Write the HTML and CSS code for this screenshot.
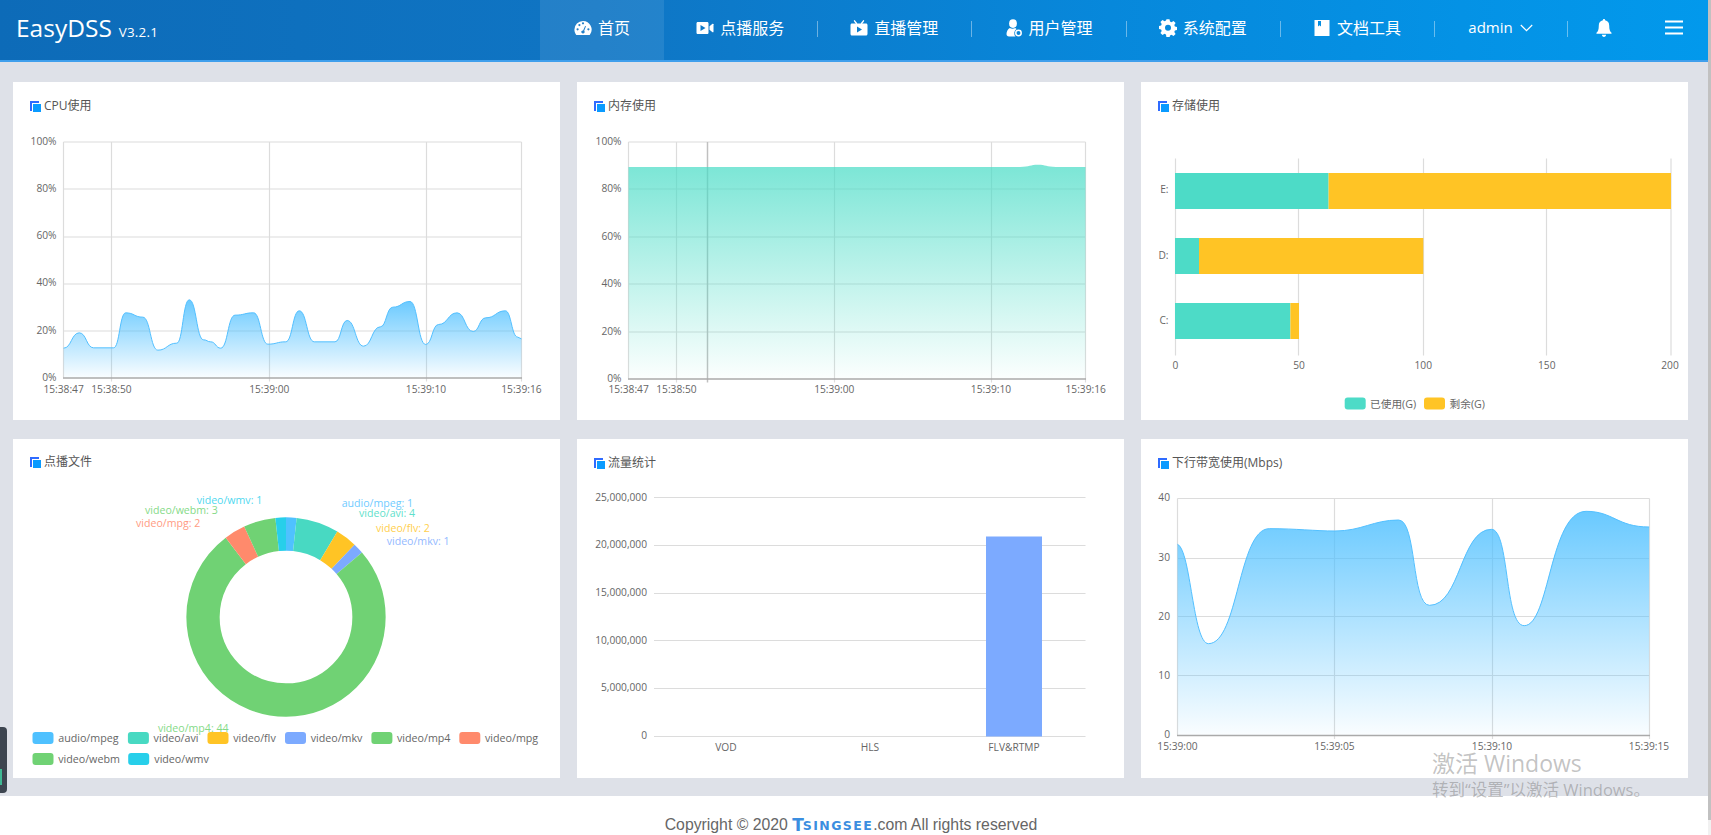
FILE: index.html
```html
<!DOCTYPE html>
<html lang="zh-CN">
<head>
<meta charset="utf-8">
<title>EasyDSS</title>
<link rel="stylesheet" href="styles.css">
</head>
<body>
<div class="page">
  <header class="topbar">
    <div class="brand"><span class="brand-name">EasyDSS</span><span class="brand-ver">V3.2.1</span></div>
    <nav class="nav">
      <div class="nav-item nav-active">
        <svg class="nav-icon" viewBox="0 0 18 16"><path fill="#fff" fill-rule="evenodd" d="M9 1a8.6 8.6 0 0 0-8.6 8.6c0 1.9.6 3.7 1.7 5.1.2.2.4.3.7.3h12.4c.3 0 .5-.1.7-.3a8.6 8.6 0 0 0-6.9-13.7zM3.6 10.4a1.1 1.1 0 1 1 0-2.2 1.1 1.1 0 0 1 0 2.2zM5.4 6.2a1.1 1.1 0 1 1 0-2.2 1.1 1.1 0 0 1 0 2.2zM9 4.4a1.1 1.1 0 1 1 0-2.200 1.1 1.1 0 0 1 0 2.200zM10.400 12.800a1.700 1.700 0 0 1-3 -1.500c.4-.7 1-1 1.700-.9l2-4.500.9.400-1.800 4.500c.5.500.6 1.300.2 2zM14.400 10.400a1.100 1.100 0 1 1 0-2.200 1.100 1.100 0 0 1 0 2.200z"/></svg>
        <span>首页</span>
      </div>
      <div class="nav-item">
        <svg class="nav-icon" viewBox="0 0 18 16"><path fill="#fff" fill-rule="evenodd" d="M1.800 2h9.400c.7 0 1.300.6 1.300 1.300v9.400c0 .7-.6 1.300-1.300 1.300H1.800c-.7 0-1.300-.6-1.300-1.300V3.300C.5 2.600 1.100 2 1.800 2zM4.500 5v6l5-3z"/><path fill="#fff" d="M13.500 6.200l3-2.400c.4-.3 1-.1 1 .5v7.400c0 .6-.6.8-1 .5l-3-2.400z"/></svg>
        <span>点播服务</span>
      </div>
      <i class="sep"></i>
      <div class="nav-item">
        <svg class="nav-icon" viewBox="0 0 18 16"><path fill="#fff" fill-rule="evenodd" d="M2 3.500h14c.8 0 1.500.7 1.500 1.500v9c0 .8-.7 1.500-1.500 1.500H2c-.8 0-1.500-.7-1.500-1.500V5c0-.8.7-1.500 1.500-1.500zM7 6.500v6l5-3z"/><path fill="none" stroke="#fff" stroke-width="1.400" stroke-linecap="round" d="M6.500 3.500L4.500.8M11.500 3.500L13.500.8"/></svg>
        <span>直播管理</span>
      </div>
      <i class="sep"></i>
      <div class="nav-item">
        <svg class="nav-icon" viewBox="0 0 18 18"><ellipse fill="#fff" cx="8" cy="4.600" rx="3.900" ry="4.300"/><path fill="#fff" d="M4.800 9c-2 1-3.300 3.500-3.300 6 0 1.300.9 2.500 2.500 2.500h6.500a5 5 0 0 1 1-7.500c-.4-.4-.8-.8-1.300-1-1.600 1-3.800 1-5.400 0z"/><circle fill="none" stroke="#fff" stroke-width="1.500" cx="13.500" cy="14" r="2.700"/></svg>
        <span>用户管理</span>
      </div>
      <i class="sep"></i>
      <div class="nav-item">
        <svg class="nav-icon" viewBox="0 0 18 18"><path fill="#fff" fill-rule="evenodd" d="M7.500.5h3l.5 2.400 1.500.6 2-1.300 2.100 2.100-1.300 2 .6 1.500 2.400.5v3l-2.400.5-.6 1.500 1.300 2-2.100 2.100-2-1.300-1.500.6-.5 2.400h-3L7 15.700l-1.500-.6-2 1.300-2.100-2.100 1.300-2-.6-1.500L0 10.300v-3l2.100-.5.600-1.500-1.300-2 2.100-2.100 2 1.300L7 1.900zM9 6a3 3 0 1 0 0 6 3 3 0 0 0 0-6z" transform="translate(0 -.300)"/></svg>
        <span>系统配置</span>
      </div>
      <i class="sep"></i>
      <div class="nav-item">
        <svg class="nav-icon" viewBox="0 0 18 18"><path fill="#fff" fill-rule="evenodd" d="M1.500 1h15v16h-15zM5 2v5.500l1.500-1.300L8 7.500V2z"/></svg>
        <span>文档工具</span>
      </div>
      <i class="sep"></i>
      <div class="nav-item nav-user">
        <span class="nav-latin">admin</span>
        <svg class="nav-chev" viewBox="0 0 13 8"><path fill="none" stroke="#fff" stroke-width="1.200" d="M.8 1l5.700 5.700L12.200 1"/></svg>
      </div>
      <i class="sep"></i>
      <div class="nav-item nav-bell">
        <svg class="nav-icon-bell" viewBox="0 0 16 18"><path fill="#fff" d="M8 0c-.7 0-1.100.5-1.100 1.200C4.300 1.800 2.800 3.800 2.800 6.400c0 4.200-.8 5.800-2.300 7.400-.3.400 0 1 .5 1h14c.5 0 .8-.6.5-1-1.500-1.600-2.300-3.200-2.300-7.400 0-2.600-1.500-4.600-4.100-5.200C9.100.5 8.700 0 8 0zM5.900 15.800c0 1.200.9 2.200 2.100 2.200s2.100-1 2.100-2.200z"/></svg>
      </div>
      <div class="nav-item nav-menu">
        <svg class="nav-icon-menu" viewBox="0 0 20 15"><path fill="none" stroke="#fff" stroke-width="2" d="M1 1.500h18M1 7.500h18M1 13.500h18"/></svg>
      </div>
    </nav>
  </header>

  <main class="board">
    <section class="card">
      <h2 class="card-title"><svg class="title-icon" viewBox="0 0 11 11"><path fill="#2f6bff" d="M0 0h9v2H2v8H0z"/><path fill="#0a9bff" d="M3 3h8v8H3z"/></svg>CPU使用</h2>
      <svg class="chart" viewBox="13 130 547 290">
        <defs>
          <linearGradient id="blueFill" x1="0" y1="0" x2="0" y2="1"><stop offset="0" stop-color="#4fc0ff" stop-opacity=".85"/><stop offset="1" stop-color="#4fc0ff" stop-opacity=".03"/></linearGradient>
          <linearGradient id="tealFill" x1="0" y1="0" x2="0" y2="1"><stop offset="0" stop-color="#48dcc6" stop-opacity=".72"/><stop offset="1" stop-color="#48dcc6" stop-opacity=".02"/></linearGradient>
        </defs>
        <path class="grid" d="M63.500 141.500H521.500M63.500 188.500H521.500M63.500 236.500H521.500M63.500 283.500H521.500M63.500 330.500H521.500M63.500 141.500V377M111.500 141.500V381M269.500 141.500V381M426.500 141.500V381M521.500 141.500V381"/>
        <g transform="translate(0 120) scale(.35714 .33333)">
          <path class="area-blue" d="M178 683 C200 683 200 637 222 637 C242 637 242 682 262 682 L318 682 C335 682 335 577 352 577 C376 577 376 590 400 590 C421 590 421 689 442 689 C468 689 468 668 495 668 C512 668 512 538 530 538 C550 538 550 658 570 658 C580 658 580 664 590 664 C604 664 604 683 618 683 C638 683 638 584 658 584 C684 584 684 577 710 577 C730 577 730 671 750 671 C775 671 775 664 800 664 C819 664 819 571 838 571 C859 571 859 664 880 664 L938 664 C955 664 955 600 972 600 C995 600 995 677 1018 677 C1041 677 1041 619 1065 619 C1082 619 1082 560 1100 560 C1124 560 1124 543 1148 543 C1170 543 1170 672 1192 672 C1210 672 1210 612 1228 612 C1254 612 1254 577 1280 577 C1302 577 1302 633 1325 633 C1342 633 1342 592 1360 592 C1388 592 1388 571 1415 571 C1432 571 1432 650 1450 650 L1460 655 V772 H178 Z"/>
          <path class="line-blue" d="M178 683 C200 683 200 637 222 637 C242 637 242 682 262 682 L318 682 C335 682 335 577 352 577 C376 577 376 590 400 590 C421 590 421 689 442 689 C468 689 468 668 495 668 C512 668 512 538 530 538 C550 538 550 658 570 658 C580 658 580 664 590 664 C604 664 604 683 618 683 C638 683 638 584 658 584 C684 584 684 577 710 577 C730 577 730 671 750 671 C775 671 775 664 800 664 C819 664 819 571 838 571 C859 571 859 664 880 664 L938 664 C955 664 955 600 972 600 C995 600 995 677 1018 677 C1041 677 1041 619 1065 619 C1082 619 1082 560 1100 560 C1124 560 1124 543 1148 543 C1170 543 1170 672 1192 672 C1210 672 1210 612 1228 612 C1254 612 1254 577 1280 577 C1302 577 1302 633 1325 633 C1342 633 1342 592 1360 592 C1388 592 1388 571 1415 571 C1432 571 1432 650 1450 650 L1460 655"/>
        </g>
        <path class="axis" d="M63 377.500H522"/>
        <g class="tick end">
          <text x="56.500" y="140">100%</text><text x="56.500" y="187.700">80%</text><text x="56.500" y="234.500">60%</text><text x="56.500" y="281.700">40%</text><text x="56.500" y="329">20%</text><text x="56.500" y="376">0%</text>
        </g>
        <g class="tick mid">
          <text x="63.600" y="388">15:38:47</text><text x="111.400" y="388">15:38:50</text><text x="269.300" y="388">15:39:00</text><text x="426" y="388">15:39:10</text><text x="521.400" y="388">15:39:16</text>
        </g>
      </svg>
    </section>

    <section class="card">
      <h2 class="card-title"><svg class="title-icon" viewBox="0 0 11 11"><path fill="#2f6bff" d="M0 0h9v2H2v8H0z"/><path fill="#0a9bff" d="M3 3h8v8H3z"/></svg>内存使用</h2>
      <svg class="chart" viewBox="577 130 547 290">
        <path class="grid" d="M628.500 141.500H1085.500M628.500 188.500H1085.500M628.500 236.500H1085.500M628.500 283.500H1085.500M628.500 331.500H1085.500M628.500 141.500V378M676.500 141.500V382M834.500 141.500V382M991.500 141.500V382M1085.500 141.500V382"/>
        <path class="cursor" d="M707.500 141.500V382"/>
        <path fill="url(#tealFill)" d="M628.500 166.500H1020C1030 166.500 1030 164.300 1038 164.300C1046 164.300 1046 166.500 1056 166.500H1085.500V378H628.500Z"/>
        <path class="axis" d="M628 378.500H1086"/>
        <g class="tick end">
          <text x="621.500" y="140">100%</text><text x="621.500" y="187.700">80%</text><text x="621.500" y="235">60%</text><text x="621.500" y="282.500">40%</text><text x="621.500" y="330">20%</text><text x="621.500" y="377">0%</text>
        </g>
        <g class="tick mid">
          <text x="628.600" y="388.700">15:38:47</text><text x="676.400" y="388.700">15:38:50</text><text x="834.300" y="388.700">15:39:00</text><text x="991" y="388.700">15:39:10</text><text x="1085.700" y="388.700">15:39:16</text>
        </g>
      </svg>
    </section>

    <section class="card">
      <h2 class="card-title"><svg class="title-icon" viewBox="0 0 11 11"><path fill="#2f6bff" d="M0 0h9v2H2v8H0z"/><path fill="#0a9bff" d="M3 3h8v8H3z"/></svg>存储使用</h2>
      <svg class="chart" viewBox="1141 130 547 290">
        <path class="grid" d="M1175.500 158V355M1298.500 158V355M1423.500 158V355M1546.500 158V355M1671 158V355"/>
        <rect class="c-teal" x="1175" y="172.500" width="153.600" height="36"/><rect class="c-gold" x="1328.600" y="172.500" width="342.400" height="36"/>
        <rect class="c-teal" x="1175" y="237.500" width="24" height="36"/><rect class="c-gold" x="1199" y="237.500" width="224.300" height="36"/>
        <rect class="c-teal" x="1175" y="302.500" width="115.400" height="36"/><rect class="c-gold" x="1290.400" y="302.500" width="8.600" height="36"/>
        <g class="tick end">
          <text x="1168.500" y="188.700">E:</text><text x="1168.500" y="254">D:</text><text x="1168.500" y="319">C:</text>
        </g>
        <g class="tick mid">
          <text x="1175.500" y="364.500">0</text><text x="1299" y="364.500">50</text><text x="1423.300" y="364.500">100</text><text x="1546.800" y="364.500">150</text><text x="1670" y="364.500">200</text>
        </g>
        <rect class="c-teal" x="1344.700" y="397" width="21" height="12" rx="3"/>
        <text class="legend" x="1370" y="403">已使用(G)</text>
        <rect class="c-gold" x="1424" y="397" width="21" height="12" rx="3"/>
        <text class="legend" x="1449.500" y="403">剩余(G)</text>
      </svg>
    </section>

    <section class="card">
      <h2 class="card-title card-title-up"><svg class="title-icon" viewBox="0 0 11 11"><path fill="#2f6bff" d="M0 0h9v2H2v8H0z"/><path fill="#0a9bff" d="M3 3h8v8H3z"/></svg>点播文件</h2>
      <svg class="chart" viewBox="13 487 547 291">
        <g transform="rotate(-90 286 617)">
          <circle class="slice s-mpeg" cx="286" cy="617" r="83" pathLength="58" stroke-dasharray="1 57" stroke-dashoffset="0"/>
          <circle class="slice s-avi" cx="286" cy="617" r="83" pathLength="58" stroke-dasharray="4 54" stroke-dashoffset="-1"/>
          <circle class="slice s-flv" cx="286" cy="617" r="83" pathLength="58" stroke-dasharray="2 56" stroke-dashoffset="-5"/>
          <circle class="slice s-mkv" cx="286" cy="617" r="83" pathLength="58" stroke-dasharray="1 57" stroke-dashoffset="-7"/>
          <circle class="slice s-mp4" cx="286" cy="617" r="83" pathLength="58" stroke-dasharray="44 14" stroke-dashoffset="-8"/>
          <circle class="slice s-mpg" cx="286" cy="617" r="83" pathLength="58" stroke-dasharray="2 56" stroke-dashoffset="-52"/>
          <circle class="slice s-webm" cx="286" cy="617" r="83" pathLength="58" stroke-dasharray="3 55" stroke-dashoffset="-54"/>
          <circle class="slice s-wmv" cx="286" cy="617" r="83" pathLength="58" stroke-dasharray="1 57" stroke-dashoffset="-57"/>
        </g>
        <g class="pie-label">
          <text class="t-mpeg" x="341.700" y="503.300">audio/mpeg: 1</text>
          <text class="t-avi" x="359" y="513.300">video/avi: 4</text>
          <text class="t-flv" x="376" y="528">video/flv: 2</text>
          <text class="t-mkv" x="386.700" y="540.700">video/mkv: 1</text>
          <text class="t-wmv" x="196.700" y="500">video/wmv: 1</text>
          <text class="t-mp4" x="145" y="510">video/webm: 3</text>
          <text class="t-mpg" x="136" y="522.700">video/mpg: 2</text>
          <text class="t-mp4" x="157.900" y="727.700">video/mp4: 44</text>
        </g>
        <rect class="f-mpeg" x="32.500" y="732" width="21" height="12" rx="3"/><text class="legend" x="58.200" y="738">audio/mpeg</text>
        <rect class="f-avi" x="127.900" y="732" width="21" height="12" rx="3"/><text class="legend" x="153.600" y="738">video/avi</text>
        <rect class="f-flv" x="207.500" y="732" width="21" height="12" rx="3"/><text class="legend" x="233.200" y="738">video/flv</text>
        <rect class="f-mkv" x="285" y="732" width="21" height="12" rx="3"/><text class="legend" x="310.700" y="738">video/mkv</text>
        <rect class="f-mp4" x="371.400" y="732" width="21" height="12" rx="3"/><text class="legend" x="397" y="738">video/mp4</text>
        <rect class="f-mpg" x="459.300" y="732" width="21" height="12" rx="3"/><text class="legend" x="485" y="738">video/mpg</text>
        <rect class="f-mp4" x="32.500" y="753" width="21" height="12" rx="3"/><text class="legend" x="58.200" y="759">video/webm</text>
        <rect class="f-wmv" x="128.200" y="753" width="21" height="12" rx="3"/><text class="legend" x="154.300" y="759">video/wmv</text>
      </svg>
    </section>

    <section class="card">
      <h2 class="card-title"><svg class="title-icon" viewBox="0 0 11 11"><path fill="#2f6bff" d="M0 0h9v2H2v8H0z"/><path fill="#0a9bff" d="M3 3h8v8H3z"/></svg>流量统计</h2>
      <svg class="chart" viewBox="577 487 547 291">
        <path class="grid" d="M654 497.500H1085.500M654 545.500H1085.500M654 593.500H1085.500M654 640.500H1085.500M654 688.500H1085.500M654 736.500H1085.500"/>
        <rect class="f-mkv" x="986" y="536.500" width="56" height="200"/>
        <g class="tick end">
          <text x="647" y="496.700">25,000,000</text><text x="647" y="544">20,000,000</text><text x="647" y="591.700">15,000,000</text><text x="647" y="639.700">10,000,000</text><text x="647" y="687">5,000,000</text><text x="647" y="734.700">0</text>
        </g>
        <g class="tick mid">
          <text x="726" y="747">VOD</text><text x="870" y="747">HLS</text><text x="1014" y="747">FLV&amp;RTMP</text>
        </g>
      </svg>
    </section>

    <section class="card">
      <h2 class="card-title"><svg class="title-icon" viewBox="0 0 11 11"><path fill="#2f6bff" d="M0 0h9v2H2v8H0z"/><path fill="#0a9bff" d="M3 3h8v8H3z"/></svg>下行带宽使用(Mbps)</h2>
      <svg class="chart" viewBox="1141 487 547 291">
        <path class="grid" d="M1177.500 498.500H1649.500M1177.500 558.500H1649.500M1177.500 616.500H1649.500M1177.500 675.500H1649.500M1177.500 498.500V735M1334.500 498.500V739M1492.500 498.500V739M1649.500 498.500V739"/>
        <g transform="translate(1140 440) scale(.36417 .33333)">
          <path class="area-blue" d="M103 313 C140 330 145 611 188 611 C270 611 270 266 355 266 C430 266 480 273 535 273 C610 273 640 240 710 240 C760 240 745 496 795 496 C880 496 880 268 965 268 C1015 268 1000 557 1055 557 C1125 557 1125 214 1225 214 C1300 214 1310 261 1398 261 V885 H103 Z"/>
          <path class="line-blue" d="M103 313 C140 330 145 611 188 611 C270 611 270 266 355 266 C430 266 480 273 535 273 C610 273 640 240 710 240 C760 240 745 496 795 496 C880 496 880 268 965 268 C1015 268 1000 557 1055 557 C1125 557 1125 214 1225 214 C1300 214 1310 261 1398 261"/>
        </g>
        <path class="axis" d="M1177 735.500H1650"/>
        <g class="tick end">
          <text x="1170" y="497.300">40</text><text x="1170" y="556.700">30</text><text x="1170" y="615.700">20</text><text x="1170" y="675">10</text><text x="1170" y="734">0</text>
        </g>
        <g class="tick mid">
          <text x="1177.500" y="745.700">15:39:00</text><text x="1334.500" y="745.700">15:39:05</text><text x="1492" y="745.700">15:39:10</text><text x="1649" y="745.700">15:39:15</text>
        </g>
      </svg>
    </section>
  </main>

  <footer class="footer">
    <span>Copyright © 2020 </span><span class="mark"><span class="mark-t">T</span><span class="mark-rest">SINGSEE</span></span><span>.com All rights reserved</span>
  </footer>
</div>

<aside class="side-tab"><i class="side-meter"></i></aside>
<div class="scroll-track"><i class="scroll-thumb"></i></div>
<div class="watermark">
  <div class="wm-big">激活 Windows</div>
  <div class="wm-small">转到“设置”以激活 Windows。</div>
</div>
</body>
</html>
```

FILE: styles.css
```css
* { box-sizing: border-box; }

html, body {
  margin: 0;
  height: 100%;
  overflow: hidden;
  background: #fff;
}

body {
  font-family: "Open Sans", "Noto Sans CJK SC", sans-serif;
  color: #555;
}

.page {
  width: 1708px;
  height: 835px;
  display: flex;
  flex-direction: column;
}

/* top bar */
.topbar {
  flex: none;
  height: 62px;
  display: flex;
  align-items: stretch;
  justify-content: space-between;
  color: #fff;
  background: linear-gradient(90deg, #0d6bb8 0%, #0f75c4 35%, #0788db 65%, #0299ec 100%);
  border-bottom: 2px solid #3f9fec;
}

.brand {
  display: flex;
  align-items: baseline;
  gap: 7px;
  padding: 12.500px 0 0 16px;
}

.brand-name {
  font-size: 24.500px;
  line-height: 30px;
}

.brand-ver {
  font-size: 13.400px;
  letter-spacing: .2px;
}

.nav {
  display: flex;
  align-items: center;
  height: 60px;
  font-family: "Noto Sans CJK SC", sans-serif;
  font-size: 16px;
}

.nav-item {
  width: 153.200px;
  height: 60px;
  display: flex;
  align-items: center;
  justify-content: center;
  gap: 6px;
  padding: 0 1px 7px 0;
}

.nav-active {
  width: 124px;
  padding-right: 0;
  background: rgba(255, 255, 255, .09);
}

.nav-user { width: 132px; gap: 7px; }
.nav-bell { width: 71px; padding: 0 0 5px; }
.nav-menu { width: 69px; padding: 0 0 5px; }

.nav-latin {
  font-family: "Open Sans", sans-serif;
  font-size: 15px;
}

.nav-icon { width: 18px; height: 18px; flex: none; margin-top: 2px; }
.nav-chev { width: 13px; height: 8px; flex: none; margin-top: 2px; }
.nav-icon-bell { width: 16px; height: 18px; }
.nav-icon-menu { width: 20px; height: 15px; }

.sep {
  flex: none;
  width: 1px;
  height: 16px;
  margin-bottom: 3px;
  background: rgba(255, 255, 255, .4);
}

/* dashboard */
.board {
  flex: none;
  height: 734px;
  padding: 20px 20px 18px 13px;
  display: grid;
  grid-template-columns: repeat(3, 547px);
  grid-template-rows: 338px 339px;
  column-gap: 17px;
  row-gap: 19px;
  background: #dee1e8;
}

.card {
  background: #fff;
  overflow: hidden;
}

.card-title {
  margin: 0;
  height: 48px;
  padding: 16px 0 0 17px;
  display: flex;
  align-items: flex-start;
  gap: 3px;
  font-size: 12px;
  font-weight: 400;
  line-height: 16px;
  color: #555;
  font-family: "Open Sans", "Noto Sans CJK SC", sans-serif;
}

.card-title-up { padding-top: 15px; }

.title-icon {
  width: 11px;
  height: 11px;
  margin-top: 3px;
  flex: none;
}

.chart {
  display: block;
  width: 547px;
  height: 291px;
}

/* chart parts */
.grid { fill: none; stroke: #dcdcdc; stroke-width: 1.200; }
.axis { fill: none; stroke: #aaa; stroke-width: 1.500; }
.cursor { fill: none; stroke: #c0c0c0; stroke-width: 1.500; }
.area-blue { fill: url(#blueFill); }
.line-blue { fill: none; stroke: #52c0ff; stroke-width: 1; vector-effect: non-scaling-stroke; }

.tick text {
  font-size: 10.200px;
  fill: #666;
  dominant-baseline: central;
}
.tick.end text { text-anchor: end; }
.tick.mid text { text-anchor: middle; }

.legend {
  font-family: "Open Sans", "Noto Sans CJK SC", sans-serif;
  font-size: 10.700px;
  fill: #666;
  dominant-baseline: central;
}

.c-teal { fill: #4ddbc7; }
.c-gold { fill: #ffc425; }

.slice { fill: none; stroke-width: 33.300; }
.s-mpeg { stroke: #4fc1ff; }
.s-avi { stroke: #48d9c2; }
.s-flv { stroke: #ffc425; }
.s-mkv { stroke: #7caaff; }
.s-mp4, .s-webm { stroke: #70d274; }
.s-mpg { stroke: #ff8a6c; }
.s-wmv { stroke: #27cfea; }

.f-mpeg { fill: #4fc1ff; }
.f-avi { fill: #48d9c2; }
.f-flv { fill: #ffc425; }
.f-mkv { fill: #7caaff; }
.f-mp4 { fill: #70d274; }
.f-mpg { fill: #ff8a6c; }
.f-wmv { fill: #27cfea; }

.pie-label text { font-size: 10.600px; dominant-baseline: central; }
.t-mpeg { fill: #6fcbff; }
.t-avi { fill: #5fdfcb; }
.t-flv { fill: #ffcf4d; }
.t-mkv { fill: #93b9ff; }
.t-mp4 { fill: #85da88; }
.t-mpg { fill: #ff9b82; }
.t-wmv { fill: #4fd8ef; }

/* footer */
.footer {
  flex: none;
  height: 39px;
  padding: 19px 6px 0 0;
  display: flex;
  justify-content: center;
  align-items: center;
  white-space: pre;
  font-family: "Liberation Sans", sans-serif;
  font-size: 15.800px;
  color: #666;
}

.mark {
  display: inline-flex;
  align-items: center;
  color: #3b8ee0;
  font-family: "DejaVu Sans", sans-serif;
  font-weight: 700;
}

.mark-t { font-size: 17px; }

.mark-rest {
  font-size: 12.500px;
  letter-spacing: 1.400px;
  margin-left: -1px;
}

/* overlays */
.side-tab {
  position: absolute;
  left: 0;
  top: 727px;
  width: 7px;
  height: 66px;
  background: #3d4550;
  border-radius: 0 4px 4px 0;
}

.side-meter {
  position: absolute;
  left: 0;
  bottom: 8px;
  width: 2px;
  height: 16px;
  background: #3fb894;
}

.scroll-track {
  position: absolute;
  left: 1708px;
  top: 0;
  width: 3px;
  height: 835px;
  background: #f1f1f1;
}

.scroll-thumb {
  display: block;
  width: 3px;
  height: 820px;
  background: #c1c1c1;
}

.watermark {
  position: absolute;
  left: 1432px;
  top: 746px;
  pointer-events: none;
  color: rgba(110, 110, 110, .42);
  font-family: "Open Sans", "Noto Sans CJK SC", sans-serif;
}

.wm-big { font-size: 23px; line-height: 34px; }
.wm-small { font-size: 16.500px; line-height: 20px; }
```
